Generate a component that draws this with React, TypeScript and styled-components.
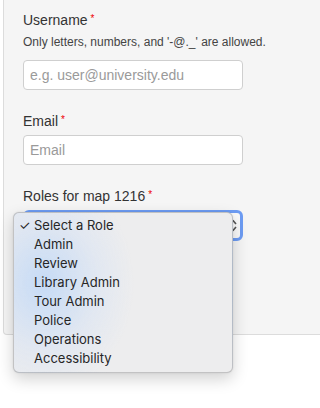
import styled, { createGlobalStyle } from "styled-components";

const GlobalStyle = createGlobalStyle`
  html, body {
    margin: 0;
    padding: 0;
    background: #fff;
    overflow: hidden;
  }
  body {
    font-family: "Liberation Sans", Arial, sans-serif;
  }
`;

const Page = styled.div`
  width: 320px;
  height: 408px;
  padding-left: 3px;
  box-sizing: border-box;
`;

const Panel = styled.div`
  width: 330px;
  box-sizing: border-box;
  background: #f5f5f5;
  border: 1px solid #dcdcdc;
  border-top: none;
  border-radius: 0 0 0 4px;
  padding: 10px 0 93px 19px;
  display: flex;
  flex-direction: column;
`;

const Group = styled.div<{ gap?: number }>`
  display: flex;
  flex-direction: column;
  margin-bottom: ${(p) => p.gap ?? 21}px;
`;

const Label = styled.label`
  font-size: 14px;
  line-height: 20px;
  color: #333;
  margin-bottom: 4px;
`;

const Required = styled.span`
  color: #e00;
  font-size: 10px;
  line-height: 10px;
  vertical-align: 3px;
  margin-left: 3px;
`;

const Help = styled.div`
  font-size: 12px;
  line-height: 16px;
  color: #444;
  margin-bottom: 10px;
`;

const Input = styled.input`
  width: 220px;
  height: 30px;
  box-sizing: border-box;
  border: 1px solid #cfcfcf;
  border-radius: 4px;
  background: #fff;
  padding: 0 6px;
  font-family: "Liberation Sans", Arial, sans-serif;
  font-size: 14px;
  color: #333;
  outline: none;
  &::placeholder {
    color: #9a9a9a;
  }
`;

const SelectWrap = styled.div`
  position: relative;
  width: 220px;
  height: 31px;
`;

const SelectBox = styled.div`
  width: 100%;
  height: 100%;
  box-sizing: border-box;
  border: 3px solid #6d9cf3;
  border-radius: 6px;
  background: #fafafa;
  display: flex;
  align-items: center;
  justify-content: flex-end;
  padding-right: 3px;
`;

const Menu = styled.ul`
  position: absolute;
  left: -10px;
  top: 2px;
  width: 220px;
  margin: 0;
  padding: 3px 0 4px;
  list-style: none;
  box-sizing: border-box;
  border: 1px solid rgba(0, 0, 0, 0.18);
  border-radius: 6px;
  background:
    radial-gradient(ellipse 90px 110px at 30px 70px, rgba(196, 218, 246, 0.95), rgba(214, 226, 244, 0.5) 60%, rgba(236, 236, 238, 0) 100%),
    #ededee;
  box-shadow: 0 6px 16px rgba(0, 0, 0, 0.18), 0 0 2px rgba(0, 0, 0, 0.1);
  font-family: Inter, "Noto Sans", sans-serif;
  font-size: 13px;
`;

const Item = styled.li`
  position: relative;
  height: 19px;
  line-height: 19px;
  padding-left: 20px;
  color: #262626;
`;

const Check = styled.span`
  position: absolute;
  left: 5px;
  top: 0;
`;

const roles = [
  "Select a Role",
  "Admin",
  "Review",
  "Library Admin",
  "Tour Admin",
  "Police",
  "Operations",
  "Accessibility",
];

function Arrows() {
  return (
    <svg width="8" height="13" viewBox="0 0 8 13" fill="none">
      <path d="M1 5 L4 1.5 L7 5" stroke="#555" strokeWidth="1.6" strokeLinejoin="round" />
      <path d="M1 8 L4 11.5 L7 8" stroke="#555" strokeWidth="1.6" strokeLinejoin="round" />
    </svg>
  );
}

export default function App() {
  return (
    <>
      <GlobalStyle />
      <Page>
        <Panel>
          <Group>
            <Label>
              Username<Required>*</Required>
            </Label>
            <Help>Only letters, numbers, and '-@._' are allowed.</Help>
            <Input placeholder="e.g. user@university.edu" readOnly />
          </Group>
          <Group>
            <Label>
              Email<Required>*</Required>
            </Label>
            <Input placeholder="Email" readOnly />
          </Group>
          <Group gap={0}>
            <Label>
              Roles for map 1216<Required>*</Required>
            </Label>
            <SelectWrap>
              <SelectBox>
                <Arrows />
              </SelectBox>
              <Menu>
                {roles.map((r, i) => (
                  <Item key={r}>
                    {i === 0 && <Check>✓</Check>}
                    {r}
                  </Item>
                ))}
              </Menu>
            </SelectWrap>
          </Group>
        </Panel>
      </Page>
    </>
  );
}
